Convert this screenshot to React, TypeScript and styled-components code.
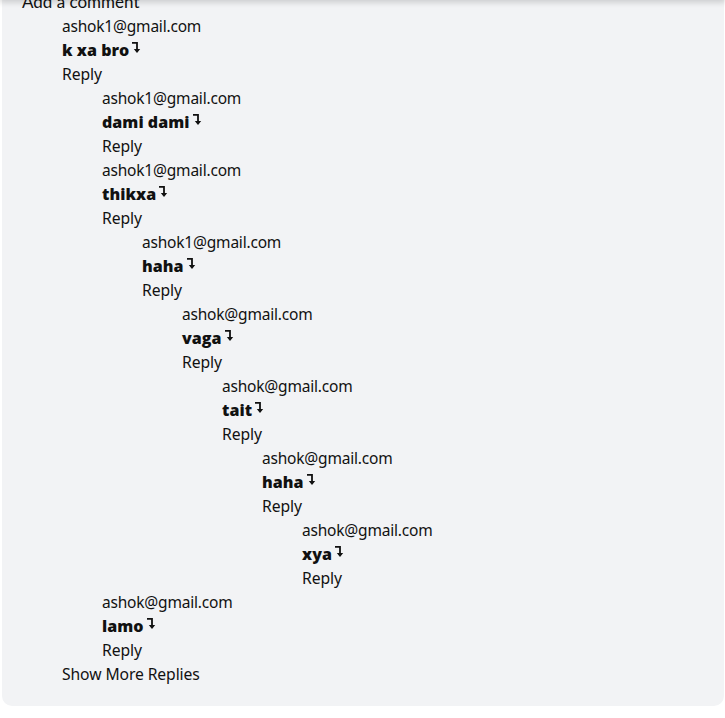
import React from "react";
import styled, { createGlobalStyle } from "styled-components";

const GlobalStyle = createGlobalStyle`
  html, body { margin: 0; padding: 0; background: #ffffff; }
  body { font-family: "Open Sans", "Noto Sans", sans-serif; color: #111111; }
`;

const TopShadow = styled.div`
  position: fixed;
  top: -6px;
  left: 0;
  right: 0;
  height: 6px;
  box-shadow: 0 1px 6px 1px rgba(0, 0, 0, 0.18);
  z-index: 2;
`;

const Panel = styled.section`
  margin: -30px 1px 0 2px;
  padding: 20px 20px 20px 20px;
  background: #f2f3f5;
  border-radius: 0 0 10px 10px;
  font-size: 16px;
  line-height: 24px;
`;

const AddComment = styled.div`
  height: 24px;
  font-family: "Lato", sans-serif;
  font-size: 17px;
`;

const Thread = styled.div<{ $indent: number }>`
  display: flex;
  flex-direction: column;
  padding-left: ${(p) => p.$indent}px;
`;

const Email = styled.div`
  height: 24px;
  font-family: "Noto Sans", sans-serif;
  font-size: 15.5px;
  letter-spacing: -0.2px;
`;

const Body = styled.div`
  height: 24px;
  display: flex;
  align-items: center;
  gap: 2px;
  font-family: "Open Sans", sans-serif;
  font-weight: 800;
  font-size: 16px;
  letter-spacing: 0.05px;
`;

const ArrowIcon = styled.svg`
  width: 10px;
  height: 13px;
  margin-top: -6px;
  flex: none;
`;

const Action = styled.div`
  height: 24px;
  font-family: "Noto Sans", sans-serif;
  font-size: 15.7px;
  letter-spacing: -0.1px;
  cursor: pointer;
`;

type C = { email: string; text: string; replies?: C[] };

const data: C[] = [
  {
    email: "ashok1@gmail.com",
    text: "k xa bro",
    replies: [
      { email: "ashok1@gmail.com", text: "dami dami" },
      {
        email: "ashok1@gmail.com",
        text: "thikxa",
        replies: [
          {
            email: "ashok1@gmail.com",
            text: "haha",
            replies: [
              {
                email: "ashok@gmail.com",
                text: "vaga",
                replies: [
                  {
                    email: "ashok@gmail.com",
                    text: "tait",
                    replies: [
                      {
                        email: "ashok@gmail.com",
                        text: "haha",
                        replies: [{ email: "ashok@gmail.com", text: "xya" }],
                      },
                    ],
                  },
                ],
              },
            ],
          },
        ],
      },
      { email: "ashok@gmail.com", text: "lamo" },
    ],
  },
];

const Arrow = () => (
  <ArrowIcon viewBox="0 0 10 13">
    <path d="M1 1.8 H6 V9.5" fill="none" stroke="#111" strokeWidth="1.8" />
    <path d="M2.8 8 L6 12 L9.2 8 Z" fill="#111" />
  </ArrowIcon>
);

const Comment = ({ c }: { c: C }) => (
  <>
    <Email>{c.email}</Email>
    <Body>
      {c.text}
      <Arrow />
    </Body>
    <Action>Reply</Action>
    {c.replies && (
      <Thread $indent={40}>
        {c.replies.map((r, i) => (
          <Comment key={i} c={r} />
        ))}
      </Thread>
    )}
  </>
);

export default function App() {
  return (
    <>
      <GlobalStyle />
      <TopShadow />
      <Panel>
        <AddComment>Add a comment</AddComment>
        <Thread $indent={40}>
          {data.map((c, i) => (
            <Comment key={i} c={c} />
          ))}
          <Action>Show More Replies</Action>
        </Thread>
      </Panel>
    </>
  );
}
